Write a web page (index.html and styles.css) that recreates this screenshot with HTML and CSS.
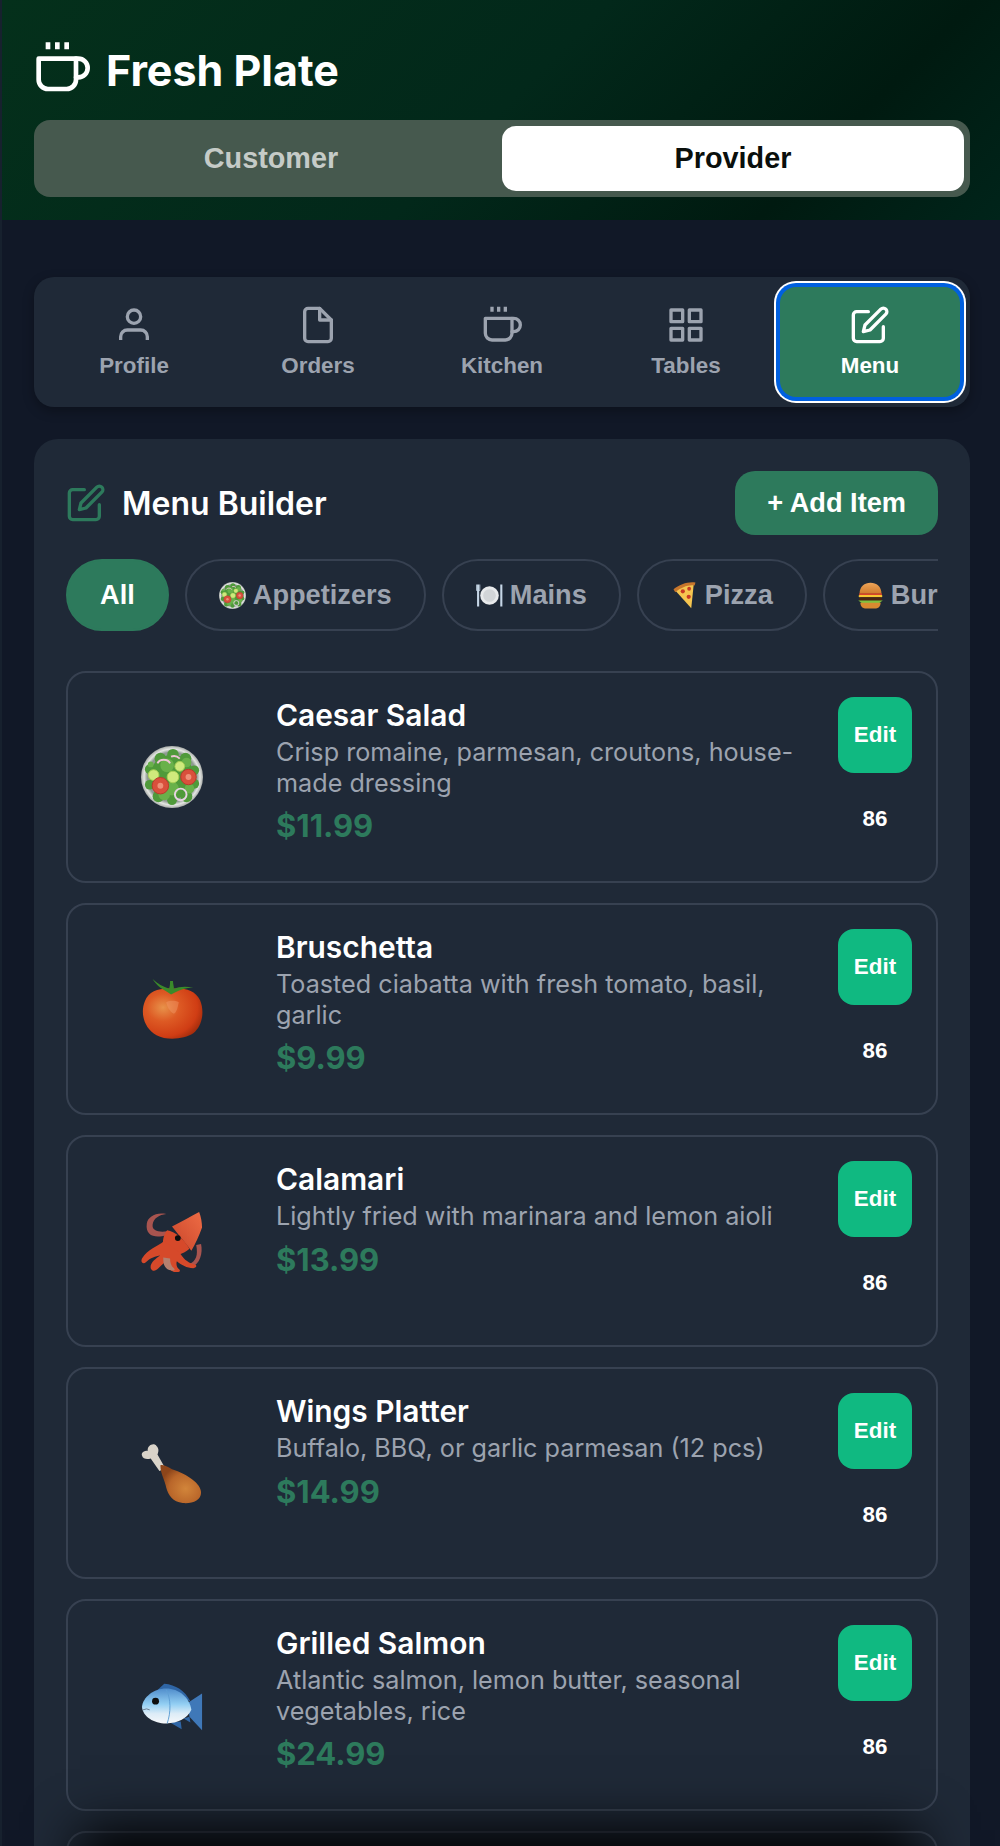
FILE: index.html
```html
<!DOCTYPE html>
<html lang="en">
<head>
    <meta charset="UTF-8">
    <meta name="viewport" content="width=device-width, initial-scale=1.0">
    <title>Fresh Plate</title>
    <link rel="stylesheet" href="styles.css">
</head>
<body>
    <svg class="sprite" aria-hidden="true">
        <defs>
            <radialGradient id="g-plate" cx="50%" cy="50%" r="50%"><stop offset="80%" stop-color="#8f9a92"/><stop offset="90%" stop-color="#e4e6e3"/><stop offset="100%" stop-color="#a9adaa"/></radialGradient>
            <radialGradient id="g-tomato" cx="34%" cy="38%" r="72%"><stop offset="0%" stop-color="#e8924a"/><stop offset="38%" stop-color="#dd5a24"/><stop offset="80%" stop-color="#d03d14"/><stop offset="100%" stop-color="#a32c0c"/></radialGradient>
            <radialGradient id="g-drum" cx="62%" cy="62%" r="62%"><stop offset="0%" stop-color="#d2853a"/><stop offset="65%" stop-color="#b9662a"/><stop offset="100%" stop-color="#8c451a"/></radialGradient>
            <linearGradient id="g-squid" x1="0" y1="1" x2="1" y2="0"><stop offset="0%" stop-color="#c9452a"/><stop offset="100%" stop-color="#ee6c45"/></linearGradient>
            <linearGradient id="g-fish" x1="0" y1="0" x2="0" y2="1"><stop offset="0%" stop-color="#4f8ccb"/><stop offset="45%" stop-color="#93cff3"/><stop offset="72%" stop-color="#dcecf7"/><stop offset="100%" stop-color="#f6f8fa"/></linearGradient>
            <linearGradient id="g-bun" x1="0" y1="0" x2="0" y2="1"><stop offset="0%" stop-color="#eda458"/><stop offset="100%" stop-color="#cf7a2c"/></linearGradient>
        </defs>

        <symbol id="i-coffee" viewBox="0 0 24 24"><path d="M18 8h1a4 4 0 0 1 0 8h-1"/><path d="M2 8h16v9a4 4 0 0 1-4 4H6a4 4 0 0 1-4-4V8z"/><path stroke-linecap="butt" d="M6 1v3M10 1v3M14 1v3"/></symbol>
        <symbol id="i-user" viewBox="0 0 24 24"><path d="M20 21v-2a4 4 0 0 0-4-4H8a4 4 0 0 0-4 4v2" stroke-linecap="butt"/><circle cx="12" cy="7" r="4"/></symbol>
        <symbol id="i-file" viewBox="0 0 24 24"><path d="M13 2H6a2 2 0 0 0-2 2v16a2 2 0 0 0 2 2h12a2 2 0 0 0 2-2V9z"/><path d="M13 2v7h7"/></symbol>
        <symbol id="i-grid" viewBox="0 0 24 24"><rect x="3" y="3" width="7" height="7"/><rect x="14" y="3" width="7" height="7"/><rect x="14" y="14" width="7" height="7"/><rect x="3" y="14" width="7" height="7"/></symbol>
        <symbol id="i-edit" viewBox="0 0 24 24"><path d="M11 4H4a2 2 0 0 0-2 2v14a2 2 0 0 0 2 2h14a2 2 0 0 0 2-2v-7"/><path d="M18.5 2.5a2.121 2.121 0 0 1 3 3L12 15l-4 1 1-4 9.5-9.5z"/></symbol>

        <symbol id="e-salad" viewBox="0 0 64 64">
            <circle cx="32" cy="32" r="32" fill="url(#g-plate)"/>
            <g fill="#4f9a3a">
                <circle cx="32" cy="32" r="23"/>
                <circle cx="20" cy="13" r="6"/><circle cx="33" cy="9" r="6"/><circle cx="46" cy="13" r="6"/>
                <circle cx="55" cy="25" r="5"/><circle cx="55" cy="39" r="5"/><circle cx="47" cy="52" r="6"/>
                <circle cx="32" cy="56" r="5"/><circle cx="18" cy="52" r="6"/><circle cx="9" cy="40" r="5"/><circle cx="9" cy="24" r="5"/>
            </g>
            <g fill="#69b14a">
                <circle cx="27" cy="20" r="7"/><circle cx="47" cy="17" r="5"/><circle cx="24" cy="50" r="6"/>
                <circle cx="50" cy="44" r="5"/><circle cx="32" cy="44" r="7"/><circle cx="10" cy="19" r="3"/>
            </g>
            <g fill="#cfe97c" stroke="#a8d056" stroke-width="1">
                <circle cx="13" cy="30" r="5.5"/><circle cx="33" cy="32" r="6"/><circle cx="40" cy="21" r="5"/>
            </g>
            <g fill="#d9503c" stroke="#b83a2a" stroke-width="1">
                <circle cx="49" cy="32" r="8"/><circle cx="20" cy="41" r="8.5"/>
            </g>
            <circle cx="49" cy="32" r="3" fill="#ef9078"/>
            <circle cx="20" cy="41" r="3" fill="#ef9078"/>
            <circle cx="41" cy="50" r="6" fill="none" stroke="#e7d4e2" stroke-width="2"/>
            <path d="M17 18a7 6 0 0 1 13 0" fill="none" stroke="#eec6d6" stroke-width="2"/>
            <path d="M31 11q5-2 9 2" fill="none" stroke="#eec6d6" stroke-width="2"/>
        </symbol>
        <symbol id="e-tomato" viewBox="0 0 64 64">
            <path d="M4 24C8 13 20 10 32 11c12-1 24 1 29 12 5 12 2 27-7 34-9 6-27 8-38 2C3 52-1 36 4 24z" fill="url(#g-tomato)"/>
            <path d="M12 1c5 5 11 8 17 10 1-3 1-6 1-8h3c0 3 1 5 1 8 5-2 12-3 20-1-8 0-13 2-19 5l-4 2c-4-3-8-5-11-7C16 7 14 4 12 1z" fill="#3a8a2a"/>
            <path d="M26 25c4-2 9-2 13 0-1 5-2 10-5 12-4-2-7-7-8-12z" fill="#f29a68" opacity=".45"/>
        </symbol>
        <symbol id="e-squid" viewBox="0 0 64 64">
            <path d="M26 26C16 29 4 28 6 14 7 7 15 2 26 4c-7 1-13 4-14 11-1 7 7 8 15 7z" fill="#a8544f"/>
            <path d="M50 56c7-4 9-9 7-20l5-1c2 9-1 21-10 24z" fill="#a8544f"/>
            <path d="M32 17C42 12 52 6 60 2c2 5 3 11 3 16-3 9-7 17-11 24z" fill="url(#g-squid)"/>
            <path d="M27 21c8 1 17 9 23 19-3 3-8 5-11 6-8 3-14 0-16-7-1-7 0-13 4-18z" fill="#d6492a"/>
            <circle cx="38" cy="29" r="3" fill="#0d0d0d"/>
            <path d="M24 32C17 38 7 40 1 50c-2 5 2 6 4 4 5-5 10-6 15-7-5 3-11 8-10 13 2 4 5 3 8 0 4-4 7-7 11-8-1 5-1 10 5 12 5 1 8-1 5-3-2-2-3-5-2-8 5 4 10 7 17 7 4-1 4-3 1-4-8-2-12-7-15-12z" fill="#d6492a"/>
            <path d="M23 49c0 5 0 10 6 13 5 1 7 0 5-2-3-2-4-6-4-10z" fill="#b4806f"/>
        </symbol>
        <symbol id="e-drumstick" viewBox="0 0 64 64">
            <path d="M7 9C6 4 13 0 16 4c3 3 2 6 1 9l8 14-6 3-9-13c-3 1-8 1-9-3-1-3 2-5 6-5z" fill="#d9d3c9"/>
            <path d="M20 24c4-1 8 2 12 4 16 5 30 15 30 24 0 8-9 12-19 11-10-1-15-8-17-16-1-7-6-14-6-23z" fill="url(#g-drum)"/>
        </symbol>
        <symbol id="e-fish" viewBox="0 0 64 64">
            <path d="M16 18c3-4 6-6 8-8 12 1 21 7 27 18z" fill="#2f66a6"/>
            <path d="M30 50l12 7-1-8zM44 46l7 4-1-6z" fill="#2f66a6"/>
            <path d="M48 30l15-10v38L50 44z" fill="#3f78b8"/>
            <path d="M1 34c1-10 12-19 25-19 13 0 24 9 26 22-4 9-14 14-26 14C13 51 2 44 1 34z" fill="url(#g-fish)"/>
            <path d="M26 16c5 9 5 24 1 35" fill="none" stroke="#5e9ed4" stroke-width="1"/>
            <circle cx="15" cy="28" r="3.6" fill="#0d0d0d"/>
            <path d="M2 37q4-2 7 0" stroke="#6b7d8f" stroke-width="1" fill="none"/>
        </symbol>
        <symbol id="e-plate" viewBox="0 0 64 64">
            <path d="M5 6v52M60 6v52" stroke="#c6d6e6" stroke-width="5" fill="none"/>
            <path d="M1 6v14h8V6" stroke="#c6d6e6" stroke-width="2" fill="none"/>
            <circle cx="32" cy="32" r="22" fill="#e8eaec"/>
            <circle cx="32" cy="32" r="15" fill="#d2d5d8"/>
        </symbol>
        <symbol id="e-pizza" viewBox="0 0 64 64">
            <path d="M8 18C22 8 42 2 54 4l-6 58z" fill="#f5c550"/>
            <path d="M6 17C20 5 42 -2 58 1l-2 7C40 6 24 13 10 24z" fill="#c8762c"/>
            <circle cx="28" cy="22" r="5" fill="#c93a24"/>
            <circle cx="43" cy="16" r="4.5" fill="#c93a24"/>
            <circle cx="42" cy="35" r="5" fill="#c93a24"/>
        </symbol>
        <symbol id="e-burger" viewBox="0 0 64 64">
            <path d="M6 28C6 11 18 2 32 2s26 9 26 26z" fill="url(#g-bun)"/>
            <rect x="5" y="27" width="54" height="4" fill="#d8432a"/>
            <rect x="4" y="31" width="56" height="5" rx="2" fill="#f7c531"/>
            <rect x="5" y="36" width="54" height="9" rx="4" fill="#4a2412"/>
            <path d="M3 44h58l-8 6H11z" fill="#7fc13e"/>
            <path d="M8 49h48c0 9-6 14-14 14H22C14 63 8 58 8 49z" fill="#d98a30"/>
        </symbol>
    </svg>

    <header class="app-header">
        <div class="brand">
            <svg class="icon brand-icon"><use href="#i-coffee"/></svg>
            <h1>Fresh Plate</h1>
        </div>
        <div class="role-toggle">
            <button class="role-btn">Customer</button>
            <button class="role-btn active">Provider</button>
        </div>
    </header>

    <main class="content">
        <nav class="tabs">
            <button class="tab"><svg class="icon"><use href="#i-user"/></svg>Profile</button>
            <button class="tab"><svg class="icon"><use href="#i-file"/></svg>Orders</button>
            <button class="tab"><svg class="icon"><use href="#i-coffee"/></svg>Kitchen</button>
            <button class="tab"><svg class="icon"><use href="#i-grid"/></svg>Tables</button>
            <button class="tab active"><svg class="icon"><use href="#i-edit"/></svg>Menu</button>
        </nav>

        <section class="panel">
            <div class="panel-head">
                <h2><svg class="icon"><use href="#i-edit"/></svg>Menu Builder</h2>
                <button class="add-btn">+ Add Item</button>
            </div>

            <div class="chips">
                <button class="chip active">All</button>
                <button class="chip"><svg class="chip-emoji"><use href="#e-salad"/></svg>Appetizers</button>
                <button class="chip"><svg class="chip-emoji"><use href="#e-plate"/></svg>Mains</button>
                <button class="chip"><svg class="chip-emoji"><use href="#e-pizza"/></svg>Pizza</button>
                <button class="chip"><svg class="chip-emoji"><use href="#e-burger"/></svg>Burgers</button>
            </div>

            <div class="items">
                <article class="item">
                    <div class="item-pic"><svg class="pic"><use href="#e-salad"/></svg></div>
                    <div class="item-info">
                        <h3>Caesar Salad</h3>
                        <p>Crisp romaine, parmesan, croutons, house-made dressing</p>
                        <div class="price">$11.99</div>
                    </div>
                    <div class="item-actions">
                        <button class="edit-btn">Edit</button>
                        <button class="off-btn">86</button>
                    </div>
                </article>
                <article class="item">
                    <div class="item-pic"><svg class="pic"><use href="#e-tomato"/></svg></div>
                    <div class="item-info">
                        <h3>Bruschetta</h3>
                        <p>Toasted ciabatta with fresh tomato, basil, garlic</p>
                        <div class="price">$9.99</div>
                    </div>
                    <div class="item-actions">
                        <button class="edit-btn">Edit</button>
                        <button class="off-btn">86</button>
                    </div>
                </article>
                <article class="item">
                    <div class="item-pic"><svg class="pic"><use href="#e-squid"/></svg></div>
                    <div class="item-info">
                        <h3>Calamari</h3>
                        <p>Lightly fried with marinara and lemon aioli</p>
                        <div class="price">$13.99</div>
                    </div>
                    <div class="item-actions">
                        <button class="edit-btn">Edit</button>
                        <button class="off-btn">86</button>
                    </div>
                </article>
                <article class="item">
                    <div class="item-pic"><svg class="pic"><use href="#e-drumstick"/></svg></div>
                    <div class="item-info">
                        <h3>Wings Platter</h3>
                        <p>Buffalo, BBQ, or garlic parmesan (12 pcs)</p>
                        <div class="price">$14.99</div>
                    </div>
                    <div class="item-actions">
                        <button class="edit-btn">Edit</button>
                        <button class="off-btn">86</button>
                    </div>
                </article>
                <article class="item">
                    <div class="item-pic"><svg class="pic"><use href="#e-fish"/></svg></div>
                    <div class="item-info">
                        <h3>Grilled Salmon</h3>
                        <p>Atlantic salmon, lemon butter, seasonal vegetables, rice</p>
                        <div class="price">$24.99</div>
                    </div>
                    <div class="item-actions">
                        <button class="edit-btn">Edit</button>
                        <button class="off-btn">86</button>
                    </div>
                </article>
                <article class="item"></article>
            </div>
        </section>
    </main>

    <div class="bottom-shadow"></div>
</body>
</html>
```

FILE: styles.css
```css
* {
    box-sizing: border-box;
}
html, body {
    height: 100%;
}
body {
    margin: 0;
    overflow: hidden;
    position: relative;
    border-left: 2px solid #17212e;
    background: #111827;
    font-family: Inter, "Liberation Sans", sans-serif;
    color: white;
}
button {
    border: none;
    background: none;
    color: inherit;
    font-family: "Liberation Sans", Arial, sans-serif;
    font-weight: bold;
    cursor: pointer;
}
.sprite {
    position: absolute;
    width: 0;
    height: 0;
}
.icon {
    width: 40px;
    height: 40px;
    flex-shrink: 0;
    fill: none;
    stroke: currentColor;
    stroke-width: 2;
    stroke-linecap: round;
    stroke-linejoin: round;
}

.app-header {
    height: 220px;
    padding: 40px 30px 0 32px;
    background: linear-gradient(135deg, #04301b 0%, #02281a 50%, #001a10 80%, #00241a 100%);
}
.brand {
    display: flex;
    align-items: flex-start;
    gap: 16px;
    height: 80px;
}
.brand-icon {
    width: 56px;
    height: 56px;
}
h1 {
    margin: 0;
    font-size: 43px;
    line-height: 60px;
    font-weight: 700;
}
.role-toggle {
    display: flex;
    padding: 6px;
    height: 77px;
    border-radius: 16px;
    background: #46594e;
}
.role-btn {
    flex: 1;
    border-radius: 14px;
    font-size: 28.8px;
    color: rgba(255, 255, 255, 0.7);
}
.role-btn.active {
    background: white;
    color: #0a0f0c;
}

.content {
    padding: 57px 30px 0 32px;
}
.tabs {
    display: flex;
    gap: 4px;
    padding: 10px;
    border-radius: 20px;
    background: #1f2937;
    box-shadow: 0 4px 12px rgba(0, 0, 0, 0.3);
}
.tab {
    flex: 1;
    height: 110px;
    display: flex;
    flex-direction: column;
    align-items: center;
    justify-content: center;
    gap: 8px;
    border-radius: 16px;
    font-size: 22.4px;
    color: #9ca3af;
}
.tab.active {
    background: #2d7a5c;
    color: white;
    box-shadow: 0 0 0 4px #0060df, 0 0 0 6px white;
}

.panel {
    margin-top: 32px;
    padding: 32px;
    border-radius: 24px;
    background: #1f2937;
}
.panel-head {
    display: flex;
    justify-content: space-between;
    align-items: center;
    height: 64px;
}
h2 {
    margin: 0;
    display: flex;
    align-items: center;
    gap: 16px;
    font-size: 32px;
    font-weight: 600;
}
h2 .icon {
    color: #2d7a5c;
}
.add-btn {
    height: 64px;
    padding: 0 32px;
    border-radius: 20px;
    background: #2d7a5c;
    font-size: 27.2px;
}
.chips {
    display: flex;
    gap: 16px;
    margin-top: 24px;
    overflow: hidden;
}
.chip {
    flex-shrink: 0;
    display: flex;
    align-items: center;
    gap: 7px;
    height: 72px;
    padding: 0 32px;
    border: 2px solid #374151;
    border-radius: 36px;
    font-size: 27.2px;
    color: #9ca3af;
}
.chip.active {
    background: #2d7a5c;
    border-color: #2d7a5c;
    color: white;
}
.chip-emoji {
    width: 27px;
    height: 27px;
}

.items {
    margin-top: 40px;
    display: flex;
    flex-direction: column;
    gap: 20px;
}
.item {
    flex-shrink: 0;
    display: flex;
    gap: 24px;
    height: 212px;
    padding: 24px;
    border: 2px solid #374151;
    border-radius: 20px;
}
.item-pic {
    width: 160px;
    flex-shrink: 0;
    display: flex;
    align-items: center;
    justify-content: center;
}
.pic {
    width: 62px;
    height: 62px;
}
.item-info {
    flex: 1;
    min-width: 0;
}
h3 {
    margin: 0 0 4px;
    font-size: 29.9px;
    line-height: 36px;
    font-weight: 600;
}
.item-info p {
    margin: 0;
    font-size: 25.2px;
    line-height: 30.6px;
    color: #9ca3af;
}
.price {
    margin-top: 10px;
    font-size: 31px;
    line-height: 36px;
    font-weight: 700;
    color: #2d7a5c;
}
.item-actions {
    width: 74px;
    flex-shrink: 0;
    display: flex;
    flex-direction: column;
    align-items: center;
}
.edit-btn {
    width: 74px;
    height: 76px;
    border-radius: 16px;
    background: #10b981;
    font-size: 22.4px;
}
.off-btn {
    margin-top: 33px;
    font-size: 22.4px;
    padding: 0;
}

/* shadow of the fixed bar sitting just under the fold */
.bottom-shadow {
    position: absolute;
    left: 78px;
    right: 80px;
    top: 1846px;
    height: 200px;
    box-shadow: 0 -16px 50px #000;
}
```
